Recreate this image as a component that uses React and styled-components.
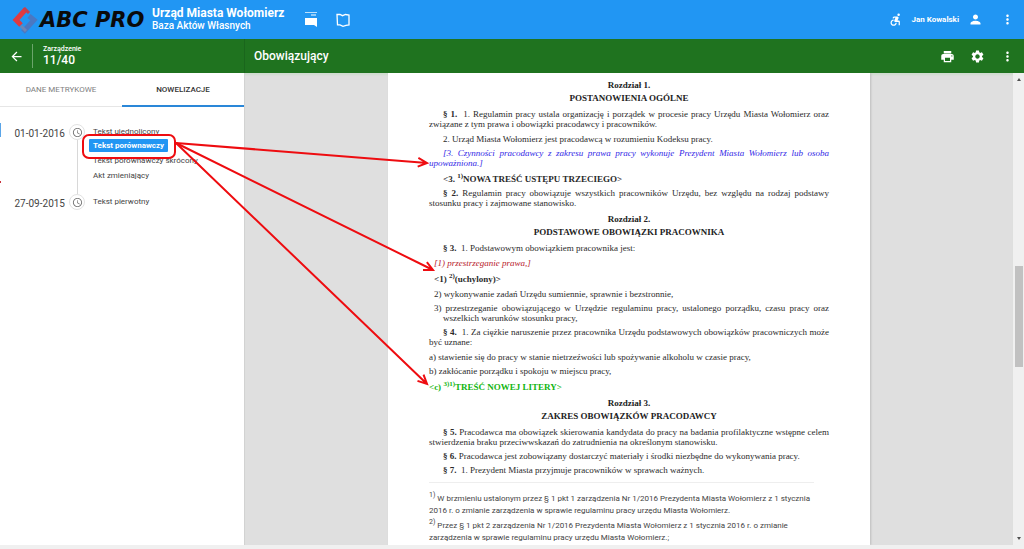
import React from 'react';
import styled, { createGlobalStyle, css } from 'styled-components';
import {
  MdAccessibleForward,
  MdArrowBack,
  MdMoreVert,
  MdPerson,
  MdPrint,
  MdSchedule,
  MdSettings,
} from 'react-icons/md';

const GlobalStyle = createGlobalStyle`
  *, *::before, *::after {
    box-sizing: border-box;
  }

  body {
    margin: 0;
    font-family: Roboto, 'Liberation Sans', sans-serif;
    color: #444;
  }

  button {
    padding: 0;
    border: 0;
    background: none;
    font: inherit;
    color: inherit;
    cursor: pointer;
  }
`;

const Page = styled.div`
  position: relative;
  display: flex;
  flex-direction: column;
  height: 100vh;
  overflow: hidden;
  background: #f0f0f0;
`;

const TopBar = styled.header`
  display: flex;
  align-items: center;
  flex: none;
  height: 39px;
  padding: 0 9px 0 12px;
  background: #2196f3;
  color: #fff;
`;

const Logo = styled.a`
  display: flex;
  align-items: center;
  width: 132px;
  margin-right: 8px;
  text-decoration: none;

  svg {
    display: block;
    flex: none;
  }
`;

const Brand = styled.div`
  margin-right: 19px;

  h1 {
    margin: 0;
    font-size: 12px;
    line-height: 13px;
    font-weight: 700;
    white-space: nowrap;
  }

  p {
    margin: 0;
    font-size: 10px;
    line-height: 12px;
    font-weight: 500;
  }
`;

const IconButton = styled.button`
  display: inline-flex;
  align-items: center;
  justify-content: center;
  flex: none;
  width: 16px;
  height: 24px;
`;

const Actions = styled.div`
  display: flex;
  align-items: center;
  gap: ${({ $gap }) => $gap}px;
  margin-left: ${({ $start }) => ($start ? '0' : 'auto')};
`;

const UserMenu = styled.div`
  display: flex;
  align-items: center;
  gap: 8px;
`;

const UserName = styled.span`
  font-size: 8px;
  line-height: 12px;
  font-weight: 700;
`;

const SubBar = styled.div`
  display: flex;
  flex: none;
  height: 34px;
  background: #1f731f;
  color: #fff;
`;

const SubBarAside = styled.div`
  display: flex;
  align-items: center;
  width: 245px;
  padding-left: 8px;
  border-right: 1px solid #1a661c;
`;

const ActInfo = styled.div`
  margin-left: 8px;
  padding: 1px 0 1px 10px;
  border-left: 1px solid #6ba56b;

  small {
    display: block;
    font-size: 7px;
    line-height: 9px;
    font-weight: 500;
  }

  strong {
    display: block;
    font-size: 12px;
    line-height: 13px;
    font-weight: 500;
  }
`;

const SubBarMain = styled.div`
  display: flex;
  align-items: center;
  flex: 1;
  padding: 0 9px;

  h2 {
    margin: 0;
    font-size: 12px;
    font-weight: 500;
  }
`;

const Body = styled.div`
  display: flex;
  flex: 1;
  min-height: 0;
  margin-bottom: 4px;
`;

const Sidebar = styled.aside`
  position: relative;
  flex: none;
  width: 245px;
  background: #fff;
  border-right: 1px solid #d2d2d2;

  &::before,
  &::after {
    content: '';
    position: absolute;
    left: 0;
    width: 1px;
  }

  &::before {
    top: 50px;
    height: 14px;
    background: #5aa5e8;
  }

  &::after {
    top: 108px;
    height: 2px;
    background: #c8323c;
  }
`;

const Tabs = styled.nav`
  display: flex;
  height: 34px;
  border-bottom: 1px solid #e6e6e6;
`;

const Tab = styled.button`
  flex: 1;
  height: 34px;
  font-size: 8px;
  color: #808080;
  border-bottom: 2px solid transparent;

  ${({ $active }) =>
    $active &&
    css`
      color: #333;
      font-weight: 500;
      border-bottom-color: #2a87d8;
    `}
`;

const Timeline = styled.ol`
  margin: 0;
  padding: 17px 0 0;
  list-style: none;
`;

const TimelineItem = styled.li`
  display: grid;
  grid-template-columns: 65px 16px 1fr;
  column-gap: 4px;
  min-height: 70px;

  time {
    padding-top: 3px;
    font-size: 10px;
    line-height: 14px;
    text-align: right;
  }
`;

const Rail = styled.div`
  display: flex;
  flex-direction: column;
  align-items: center;

  &::after {
    content: '';
    flex: 1;
    width: 1px;
    background: ${({ $last }) => ($last ? 'transparent' : '#d8d8d8')};
  }
`;

const Clock = styled.span`
  display: flex;
  align-items: center;
  justify-content: center;
  width: 16px;
  height: 16px;
  border: 1px solid #e2e2e2;
  border-radius: 50%;
  color: #777;
`;

const Versions = styled.div`
  display: flex;
  flex-direction: column;
  align-items: flex-start;
`;

const Version = styled.button`
  height: 15px;
  padding: 0 4px;
  border-radius: 1px;
  font-size: 8px;
  line-height: 14px;
  white-space: nowrap;

  ${({ $active }) =>
    $active &&
    css`
      height: 13px;
      margin-bottom: 1px;
      line-height: 13px;
      background: #2196f3;
      color: #fff;
      font-weight: 700;
    `}
`;

const Viewer = styled.main`
  display: flex;
  justify-content: center;
  flex: 1;
  min-width: 0;
  background: #dfdfdf;
  box-shadow: inset 0 3px 2px -1px #cfdccf;
  overflow: hidden;
`;

const Sheet = styled.article`
  width: 482px;
  padding: 6px 41px 0;
  background: #fff;
  box-shadow: 1px 0 2px #bdbdbd;
  font-family: 'Liberation Serif', 'Times New Roman', serif;
  font-size: 9px;
  line-height: 10px;
`;

const ChapterTitle = styled.h3`
  margin: 0;
  font-size: 9px;
  line-height: 12px;
  text-align: center;
  color: #222;

  span {
    display: block;
    margin-bottom: 1px;
  }
`;

const Paragraph = styled.p`
  margin: 0 0 ${({ $loose }) => ($loose ? 5 : 4)}px;
  padding-left: ${({ $hang }) => ($hang ? 14 : 0)}px;
  text-indent: ${({ $indent }) => $indent}px;
  text-align: justify;
  color: ${({ $color }) => $color || '#2a2a2a'};
  font-style: ${({ $italic }) => ($italic ? 'italic' : 'normal')};
  font-weight: ${({ $bold }) => ($bold ? 700 : 400)};

  sup {
    font-size: 7px;
    line-height: 8px;
  }
`;

const Section = styled.section`
  margin-bottom: 5px;

  ${ChapterTitle} {
    margin-bottom: 5px;
  }
`;

const Footnotes = styled.footer`
  margin: 7px 15px 0 0;
  padding-top: 10px;
  border-top: 1px solid #eee;
  font-family: Roboto, 'Liberation Sans', sans-serif;
  font-size: 8px;
  line-height: 12px;
  color: #444;

  p {
    margin: 0 0 3px;
  }

  sup {
    font-size: 7px;
    line-height: 0;
  }
`;

const ScrollBar = styled.div`
  display: flex;
  flex-direction: column;
  align-items: center;
  justify-content: space-between;
  flex: none;
  width: 11px;
  background: #f0f0f0;
`;

const ScrollTrack = styled.div`
  display: flex;
  flex-direction: column;
  flex: 1;
  width: 8px;

  &::before {
    content: '';
    flex: 183;
  }

  &::after {
    content: '';
    flex: 168;
  }
`;

const ScrollThumb = styled.div`
  flex: 101;
  background: #c1c1c1;
`;

const ScrollArrow = styled.span`
  width: 0;
  height: 0;
  margin: 3px 0;
  border: 2px solid transparent;
  border-${({ $up }) => ($up ? 'bottom' : 'top')}: 3px solid #505050;
`;

/* Annotation layer drawn over the whole screen */
const Annotations = styled.svg`
  position: absolute;
  top: 0;
  left: 0;
  pointer-events: none;
`;

const Wordmark = styled.span`
  margin-left: 2px;
  font-family: 'DejaVu Sans', sans-serif;
  font-size: 21px;
  line-height: 24px;
  font-weight: 700;
  font-style: italic;
  color: #0a0a0a;
  white-space: nowrap;
`;

const BLUE = '#3228e6';
const RED = '#b8202c';
const GREEN = '#11b511';

const timeline = [
  {
    date: '01-01-2016',
    versions: ['Tekst ujednolicony', 'Tekst porównawczy', 'Tekst porównawczy skrócony', 'Akt zmieniający'],
  },
  { date: '27-09-2015', versions: ['Tekst pierwotny'] },
];

const chapters = [
  {
    number: 'Rozdział 1.',
    title: 'POSTANOWIENIA OGÓLNE',
    items: [
      { indent: 14, loose: true, lead: '§ 1.', text: ' \u00a01. Regulamin pracy ustala organizację i porządek w procesie pracy Urzędu Miasta Wołomierz oraz związane z tym prawa i obowiązki pracodawcy i pracowników.' },
      { indent: 14, text: '2. Urząd Miasta Wołomierz jest pracodawcą w rozumieniu Kodeksu pracy.' },
      { indent: 14, color: BLUE, italic: true, text: '[3. Czynności pracodawcy z zakresu prawa pracy wykonuje Prezydent Miasta Wołomierz lub osoba upoważniona.]' },
      { indent: 14, bold: true, lead: '<3. ', sup: '1)', text: 'NOWA TREŚĆ USTĘPU TRZECIEGO>' },
      { indent: 14, lead: '§ 2.', text: ' Regulamin pracy obowiązuje wszystkich pracowników Urzędu, bez względu na rodzaj podstawy stosunku pracy i zajmowane stanowisko.' },
    ],
  },
  {
    number: 'Rozdział 2.',
    title: 'PODSTAWOWE OBOWIĄZKI PRACOWNIKA',
    items: [
      { indent: 14, loose: true, lead: '§ 3.', text: ' \u00a01. Podstawowym obowiązkiem pracownika jest:' },
      { indent: 5, color: RED, italic: true, text: '[1) przestrzeganie prawa,]' },
      { indent: 5, bold: true, loose: true, lead: '<1) ', sup: '2)', text: '(uchylony)>' },
      { indent: 5, text: '2) wykonywanie zadań Urzędu sumiennie, sprawnie i bezstronnie,' },
      { indent: -9, hang: true, text: '3) przestrzeganie obowiązującego w Urzędzie regulaminu pracy, ustalonego porządku, czasu pracy oraz wszelkich warunków stosunku pracy,' },
      { indent: 14, loose: true, lead: '§ 4.', text: ' \u00a01. Za ciężkie naruszenie przez pracownika Urzędu podstawowych obowiązków pracowniczych może być uznane:' },
      { indent: 0, text: 'a) stawienie się do pracy w stanie nietrzeźwości lub spożywanie alkoholu w czasie pracy,' },
      { indent: 0, text: 'b) zakłócanie porządku i spokoju w miejscu pracy,' },
      { indent: 0, color: GREEN, bold: true, lead: '<c) ', sup: '3)1)', text: 'TREŚĆ NOWEJ LITERY>' },
    ],
  },
  {
    number: 'Rozdział 3.',
    title: 'ZAKRES OBOWIĄZKÓW PRACODAWCY',
    items: [
      { indent: 14, lead: '§ 5.', text: ' Pracodawca ma obowiązek skierowania kandydata do pracy na badania profilaktyczne wstępne celem stwierdzenia braku przeciwwskazań do zatrudnienia na określonym stanowisku.' },
      { indent: 14, lead: '§ 6.', text: ' Pracodawca jest zobowiązany dostarczyć materiały i środki niezbędne do wykonywania pracy.' },
      { indent: 14, lead: '§ 7.', text: ' \u00a01. Prezydent Miasta przyjmuje pracowników w sprawach ważnych.' },
    ],
  },
];

const footnotes = [
  ['1)', 'W brzmieniu ustalonym przez § 1 pkt 1 zarządzenia Nr 1/2016 Prezydenta Miasta Wołomierz z 1 stycznia 2016 r. o zmianie zarządzenia w sprawie regulaminu pracy urzędu Miasta Wołomierz.'],
  ['2)', 'Przez § 1 pkt 2 zarządzenia Nr 1/2016 Prezydenta Miasta Wołomierz z 1 stycznia 2016 r. o zmianie zarządzenia w sprawie regulaminu pracy urzędu Miasta Wołomierz.;'],
];

const arrows = [
  [427, 163],
  [433, 270],
  [427, 384],
];

const LogoMark = () => (
  <svg width="26" height="28" viewBox="0 0 26 28" fill="none" strokeWidth="5" aria-hidden="true">
    <path d="M17 10 L22 14 L11 26" stroke="#4a78c2" />
    <path d="M9 20 L14 25" stroke="#6f86b4" strokeWidth="3" />
    <path d="M14 3 L4 14 L9 19" stroke="#e03a40" />
    <path d="M12 2 L17 7" stroke="#c4404f" strokeWidth="3" />
  </svg>
);

const Arrow = ({ to: [x, y] }) => {
  const startX = 176;
  const startY = 143;
  const angle = Math.atan2(y - startY, x - startX);
  const wing = (turn) => `${x - 10 * Math.cos(angle + turn)} ${y - 10 * Math.sin(angle + turn)}`;

  return <path d={`M${startX} ${startY} L${x} ${y} M${wing(0.45)} L${x} ${y} L${wing(-0.45)}`} />;
};

const App = () => {
  return (
    <Page>
      <GlobalStyle />
      <TopBar>
        <Logo href="#" aria-label="ABC PRO">
          <LogoMark />
          <Wordmark>ABC PRO</Wordmark>
        </Logo>
        <Brand>
          <h1>Urząd Miasta Wołomierz</h1>
          <p>Baza Aktów Własnych</p>
        </Brand>
        <Actions $gap={16} $start>
          <IconButton aria-label="Bazy">
            <svg width="14" height="15" viewBox="0 0 14 15" fill="#fff">
              <path d="M1 0h12v1H1z" opacity="0.7" />
              <path d="M7 2h5v2H7z" opacity="0.5" />
              <path d="M1 6h12v9l-3-2H1z" />
            </svg>
          </IconButton>
          <IconButton aria-label="Teczka">
            <svg width="14" height="14" viewBox="0 0 14 14" fill="none" stroke="#fff" strokeWidth="1.3">
              <path d="M1 1.500h3l2.500 1.200 3-1.200L13 2v10l-3 .3-3 1-3-1.500H1.500z" />
            </svg>
          </IconButton>
        </Actions>
        <Actions $gap={16}>
          <UserMenu>
            <IconButton aria-label="Dostępność">
              <MdAccessibleForward size={15} />
            </IconButton>
            <UserName>Jan Kowalski</UserName>
            <IconButton aria-label="Profil">
              <MdPerson size={15} />
            </IconButton>
          </UserMenu>
          <IconButton aria-label="Więcej">
            <MdMoreVert size={15} />
          </IconButton>
        </Actions>
      </TopBar>

      <SubBar>
        <SubBarAside>
          <IconButton aria-label="Wstecz">
            <MdArrowBack size={15} />
          </IconButton>
          <ActInfo>
            <small>Zarządzenie</small>
            <strong>11/40</strong>
          </ActInfo>
        </SubBarAside>
        <SubBarMain>
          <h2>Obowiązujący</h2>
          <Actions $gap={14}>
            <IconButton aria-label="Drukuj">
              <MdPrint size={15} />
            </IconButton>
            <IconButton aria-label="Ustawienia">
              <MdSettings size={15} />
            </IconButton>
            <IconButton aria-label="Więcej">
              <MdMoreVert size={15} />
            </IconButton>
          </Actions>
        </SubBarMain>
      </SubBar>

      <Body>
        <Sidebar>
          <Tabs>
            <Tab>DANE METRYKOWE</Tab>
            <Tab $active>NOWELIZACJE</Tab>
          </Tabs>
          <Timeline>
            {timeline.map(({ date, versions }, index) => (
              <TimelineItem key={date}>
                <time>{date}</time>
                <Rail $last={index === timeline.length - 1}>
                  <Clock>
                    <MdSchedule size={11} />
                  </Clock>
                </Rail>
                <Versions>
                  {versions.map((version) => (
                    <Version key={version} $active={version === 'Tekst porównawczy'}>
                      {version}
                    </Version>
                  ))}
                </Versions>
              </TimelineItem>
            ))}
          </Timeline>
        </Sidebar>

        <Viewer>
          <Sheet>
            {chapters.map(({ number, title, items }) => (
              <Section key={number}>
                <ChapterTitle>
                  <span>{number}</span>
                  {title}
                </ChapterTitle>
                {items.map(({ lead, sup, text, indent, hang, loose, color, italic, bold }) => (
                  <Paragraph
                    key={text}
                    $indent={indent}
                    $hang={hang}
                    $loose={loose}
                    $color={color}
                    $italic={italic}
                    $bold={bold}
                  >
                    {lead && <b>{lead}</b>}
                    {sup && <sup>{sup}</sup>}
                    {text}
                  </Paragraph>
                ))}
              </Section>
            ))}
            <Footnotes>
              {footnotes.map(([mark, text]) => (
                <p key={mark}>
                  <sup>{mark}</sup> {text}
                </p>
              ))}
            </Footnotes>
          </Sheet>
        </Viewer>

        <ScrollBar>
          <ScrollArrow $up />
          <ScrollTrack>
            <ScrollThumb />
          </ScrollTrack>
          <ScrollArrow />
        </ScrollBar>
      </Body>

      <Annotations width="100%" height="100%" fill="none" stroke="#ee0c10" strokeWidth="2">
        <rect x="83" y="135" width="92" height="23" rx="6" />
        {arrows.map((point) => (
          <Arrow key={point.join()} to={point} />
        ))}
      </Annotations>
    </Page>
  );
};

export default App;
